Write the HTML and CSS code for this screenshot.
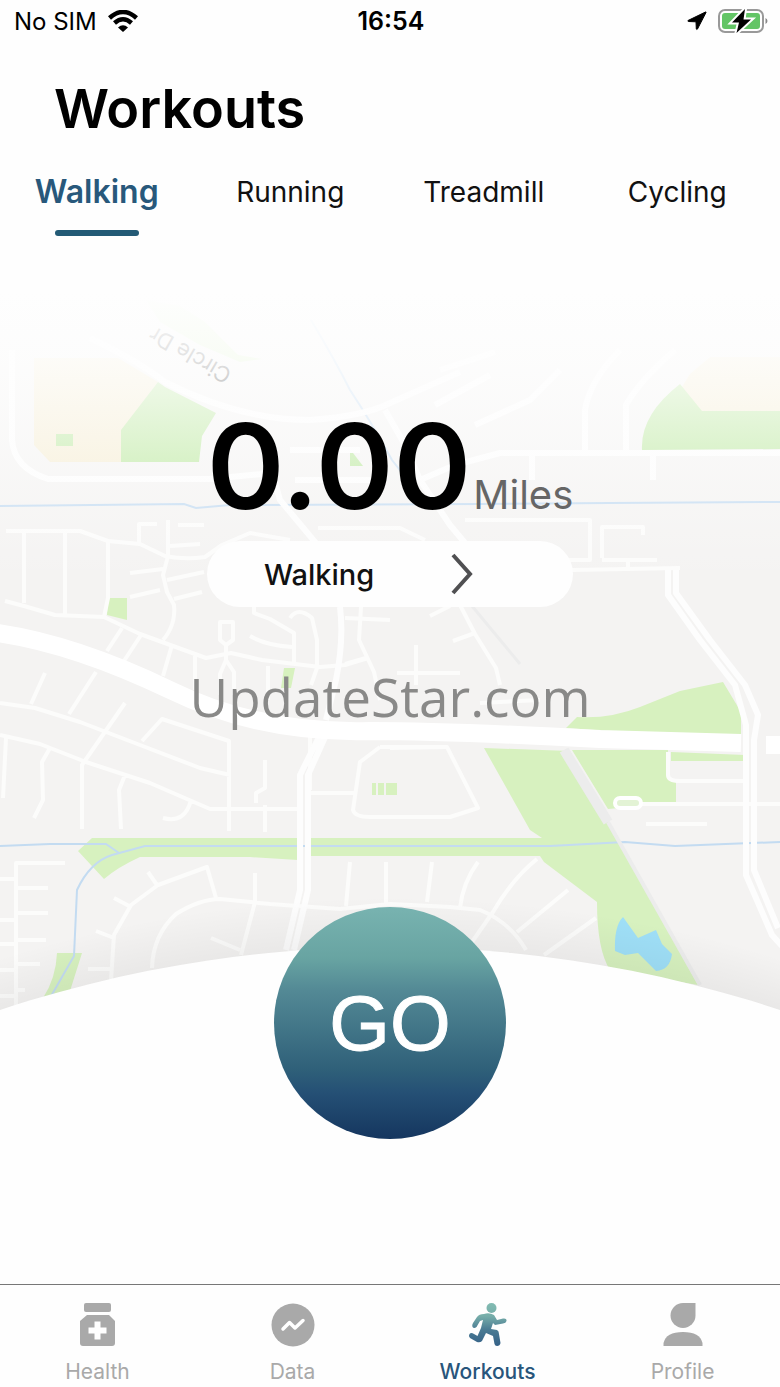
FILE: index.html
```html
<!DOCTYPE html>
<html lang="en">
<head>
    <meta charset="UTF-8">
    <meta name="viewport" content="width=device-width, initial-scale=1.0">

    <title>Workouts</title>

    <link rel="stylesheet" href="styles.css">
</head>
<body>

    <!-- Status bar -->
    <div class="status-bar">
        <div class="carrier">
            <span>No SIM</span>
            <svg class="wifi-icon" viewBox="0 0 30 22" aria-hidden="true">
                <path d="M1.500 8 Q15 -4 28.500 8" fill="none" stroke="#000" stroke-width="4.500"/>
                <path d="M6.500 13 Q15 5.500 23.500 13" fill="none" stroke="#000" stroke-width="4.500"/>
                <path d="M10 17.500 Q15 13 20 17.500 L15 22 Z"/>
            </svg>
        </div>
        <time class="clock">16:54</time>
        <div class="indicators">
            <svg class="location-icon" viewBox="0 0 20 20" aria-hidden="true">
                <path d="M18.500 1 L1 9.500 Q0.500 10.300 1.500 10.500 L9 10.800 L9.300 18 Q9.800 19 10.500 18 L19 1.500 Q19.200 0.600 18.500 1 Z" stroke="#000" stroke-width="1"/>
            </svg>
            <svg class="battery-icon" viewBox="0 0 50 26" aria-hidden="true">
                <rect x="1" y="2" width="44" height="22" rx="6" fill="none" stroke="#999" stroke-width="2"/>
                <rect x="4" y="5" width="38" height="16" rx="3" fill="#63c566"/>
                <path d="M47.500 10 Q49.500 11 49.500 13 Q49.500 15 47.500 16 Z" fill="#888"/>
                <path d="M27 1 L14 14.500 H21 L18.500 25 L33 11.500 H25.500 Z" fill="#000" stroke="#fff" stroke-width="4" paint-order="stroke"/>
            </svg>
        </div>
    </div>

    <h1 class="page-title">Workouts</h1>

    <!-- Workout type tabs -->
    <nav class="tabs">
        <a href="#walking" class="tab active">Walking</a>
        <a href="#running" class="tab">Running</a>
        <a href="#treadmill" class="tab">Treadmill</a>
        <a href="#cycling" class="tab">Cycling</a>
    </nav>

    <main class="stage">
        <svg class="map" viewBox="0 260 780 780" aria-hidden="true">
            <defs>
                <linearGradient id="fade" x1="0" y1="260" x2="0" y2="580" gradientUnits="userSpaceOnUse">
                    <stop offset="0" stop-color="#fefefe"/>
                    <stop offset="0.100" stop-color="#fefefe"/>
                    <stop offset="0.310" stop-color="#fefefe" stop-opacity="0.860"/>
                    <stop offset="0.560" stop-color="#fefefe" stop-opacity="0.550"/>
                    <stop offset="0.750" stop-color="#fefefe" stop-opacity="0.300"/>
                    <stop offset="1" stop-color="#fefefe" stop-opacity="0"/>
                </linearGradient>
                <radialGradient id="shade" cx="390" cy="2186" r="1289" gradientUnits="userSpaceOnUse">
                    <stop offset="0.961" stop-color="#000" stop-opacity="0.045"/>
                    <stop offset="1" stop-color="#000" stop-opacity="0"/>
                </radialGradient>
            </defs>

            <rect y="260" width="780" height="780" fill="#f4f3f2"/>

            <!-- fields and parks -->
            <path d="M34 358 H118 L158 382 L122 430 V462 H50 L34 445 Z" fill="#f5ecd0"/>
            <path d="M690 374 L710 357 H780 V412 H700 L680 390 Z" fill="#f5ecd0"/>
            <g fill="#d7f1bf">
                <path d="M158 382 L165 387 L216 413 L202 436 L199 462 H121 V430 Z" fill="#b8e79a"/>
                <path d="M56 434 H73 V446 H56 Z" fill="#b8e79a"/>
                <path d="M146 300 L180 306 L205 322 L238 355 L262 359 L240 362 L200 345 L160 322 Z"/>
                <path d="M350 449 L363 466 H350 Z" fill="#b8e79a"/>
                <path d="M642 450 Q640 415 680 384 L702 411 H780 V449 Z" fill="#b8e79a"/>
                <path d="M108 598 H127 V620 L107 615 Z"/>
                <path d="M284 668 H295 L291 688 H281 Z"/>
                <path d="M566 728 L577 717 Q610 719 640 707 L680 691 L723 682 L741 712 V740 Z"/>
                <path d="M671 752 L745 755 V761 H671 Z"/>
                <path d="M484 748 L570 751 L620 843 L698 985 L610 970 Q597 950 597 902 L544 862 L540 856 H310 V838 H542 L530 830 Z"/>
                <path d="M572 750 H668 V780 H676 V803 L608 809 Z"/>
                <path d="M92 838 H298 V860 L250 857 H140 Q118 867 104 879 L78 851 Z"/>
                <path d="M57 953 H82 L70 991 L43 998 Q56 978 57 953 Z"/>
                <path d="M372 783 H397 V795 H372 Z"/>
            </g>

            <!-- water -->
            <g fill="none" stroke="#c3dbf1" stroke-width="2">
                <path d="M0 506 L184 504 L196 508 L230 505 L480 504 L610 503 L780 502"/>
                <path d="M0 846 L50 844 H106 L119 853"/>
                <path d="M50 998 L74 956 L77 890 Q90 862 112 855 L145 846 H310 L550 846 L625 842 L675 846 L780 842"/>
                <path d="M311 320 Q335 360 350 390 Q370 420 392 460 L425 502"/>
            </g>
            <path d="M615 951 Q614 926 623 917 L638 938 L656 930 L662 944 L672 954 Q670 970 656 971 L638 953 L625 955 Z" fill="#9fdff7"/>

            <!-- pale paths -->
            <g fill="none" stroke="#ececec" stroke-width="10">
                <path d="M564 750 L608 822"/>
                <path d="M608 822 L700 985" stroke-width="4"/>
                <path d="M472 606 L520 664" stroke-width="3"/>
            </g>

            <!-- small streets -->
            <g class="streets">
                <path d="M6 531 H80 L108 541 L140 544 L165 556 Q185 560 205 557 L222 545 L250 533 L290 540 M24 532 V603 M65 532 V614 M108 542 V598 L104 617 M5 601 L24 606 L55 615 L104 617 L140 634 L206 658 L231 653 L262 660 L320 667 L345 665 L368 658"/>
                <path d="M139 544 V524 H157 M168 520 V556 L163 575 L167 592 L174 605 Q176 625 163 640 M178 525 H204 M170 546 L200 544 M130 573 L163 569 M167 580 L204 572 M130 597 L160 590 M174 599 L202 592"/>
                <path d="M122 628 L107 651 M141 635 L124 661 M172 645 L163 676 M195 656 V690 M250 636 Q265 645 292 647 M254 606 V613 L270 619 L294 633 V662 M290 618 Q298 606 312 618 L317 640 V668 L311 685 M268 666 V700 M361 607 L359 640 L374 672 L380 700 M345 664 L366 658"/>
                <path d="M220 622 V640 L226 645 L233 640 V622 Z M226 645 V660 L220 674 V695 M226 660 L234 672 V695"/>
                <path d="M0 703 L35 708 L80 722 L140 745 L200 768 L230 775 M45 673 L31 704 M96 672 L69 714 M125 703 L82 765 V829 M142 741 L162 719 L229 741 V831 M0 735 L40 744 L86 762 L150 783 L210 809 H303 M50 748 L42 762 L43 800 L34 818 M6 738 L3 798 M125 775 L119 790 L121 829 M191 800 Q185 824 163 818 M265 760 V788 L256 793 V803 M265 805 V832"/>
                <path d="M308 793 H355 M380 747 L360 762 L353 810 Q355 817 370 817 H450 L478 808 L447 747 L380 747 M310 724 V790"/>
                <path d="M65 863 H16 V1005 M0 879 H16 M16 888 H48 M0 920 H16 M16 913 H48 M0 944 H16 M16 940 H46 M16 964 H40 M0 970 H16 M16 990 H25 M0 996 H16"/>
                <path d="M111 980 L114 935 L131 905 L158 885 L207 867 L216 898 M148 872 L157 885 M114 898 L131 907 M96 931 L114 938 M88 969 H111"/>
                <path d="M152 968 Q153 935 176 914 Q200 899 220 899 L270 904 L340 909 L390 904 L450 907 L480 910 Q510 922 526 950 M255 873 V902 L241 955 M211 938 L240 950 M350 862 L346 906 M386 862 V904 M432 862 L427 902 M478 862 Q463 882 460 908 M537 859 Q513 878 493 912 L472 942 M568 890 L517 932 M596 918 L544 955"/>
                <path d="M318 528 H400 L425 540 M465 520 H590 V560 H560 M572 570 L680 568 M602 558 V527 H643 V535 M602 560 H657 M628 560 V568 M460 605 L475 634 L496 668 L500 685 M430 616 L450 606 M453 641 L475 633 M416 645 V685 M397 673 H460 M480 703 L540 700 M345 618 L390 620"/>
                <path d="M390 748 L447 747 M668 752 V775 Q668 781 680 781 H745 M640 804 H780 M646 824 H707"/>
            </g>
            <rect x="615" y="798" width="26" height="10" rx="5" fill="#e3f3d5" stroke="#fff" stroke-width="4"/>
            <path d="M377 783 V795 M385 783 V795" stroke="#f4f3f2" stroke-width="2"/>

            <!-- wider streets -->
            <g class="roads">
                <path d="M12 350 V440 Q14 468 48 479 H210 L262 474 L275 482 L280 500 L330 560"/>
                <path d="M90 338 Q140 362 165 382 Q240 420 310 420 Q365 416 390 403 L460 372"/>
                <path d="M385 410 L405 445 L420 480 L450 525 L475 555 M420 480 L455 465 L500 453 H780 M585 452 V410 Q590 380 620 350 M626 452 V405 Q640 380 675 350 M440 370 L495 352 M435 405 L490 375 M475 425 L530 400 L560 370"/>
                <path d="M290 450 H360 M295 480 H385 M653 455 V480 M532 455 V480"/>
                <path d="M340 607 Q344 640 336 680 L326 720 M320 735 L300 775 V890 L286 950 M326 735 L308 775 V890 L294 950"/>
                <path d="M668 570 V595 L700 640 L735 685 L746 725 V875 L772 935 L790 955 M676 570 V593 L710 640 L745 685 L758 715 L754 740 V870 L778 928"/>
            </g>

            <!-- highway -->
            <path d="M-10 632 Q70 642 170 690 Q260 734 370 731 Q450 731 600 739 L741 743 M766 745 H790" fill="none" stroke="#fff" stroke-width="18"/>

            <text class="street-name" transform="translate(233 371) rotate(210)">Circle Dr</text>

            <rect y="260" width="780" height="320" fill="url(#fade)"/>
            <rect y="880" width="780" height="160" fill="url(#shade)"/>
            <circle cx="390" cy="2186" r="1239" fill="#fefefe"/>
        </svg>

        <div class="distance">
            <span class="distance-value">0.00</span>
            <span class="distance-unit">Miles</span>
        </div>

        <button type="button" class="mode-btn">
            <span>Walking</span>
            <svg class="chevron" viewBox="0 0 22 44" aria-hidden="true">
                <path d="M2 3 L19 22 L2 41" fill="none" stroke="#505052" stroke-width="4"/>
            </svg>
        </button>

        <p class="watermark">UpdateStar.com</p>

        <button type="button" class="go-btn">GO</button>
    </main>

    <!-- Bottom navigation -->
    <nav class="bottom-nav">
        <a href="#health" class="nav-item">
            <svg class="nav-icon" viewBox="0 0 44 44" aria-hidden="true">
                <rect x="8" y="0" width="27" height="9" rx="2"/>
                <path d="M11 12 H33 L39 18 V40 Q39 43 36 43 H7 Q4 43 4 40 V18 Z"/>
                <path d="M21.500 18.500 V36.500 M12.500 27.500 H30.500" stroke="#fff" stroke-width="6"/>
            </svg>
            <span>Health</span>
        </a>
        <a href="#data" class="nav-item">
            <svg class="nav-icon" viewBox="0 0 44 44" aria-hidden="true">
                <circle cx="22" cy="22" r="21.500"/>
                <path d="M12 26 L18.500 19.500 L24 25 L32 17.500" fill="none" stroke="#fff" stroke-width="3.500" stroke-linecap="round" stroke-linejoin="round"/>
            </svg>
            <span>Data</span>
        </a>
        <a href="#workouts" class="nav-item active">
            <svg class="nav-icon" viewBox="0 0 44 44" aria-hidden="true">
                <defs>
                    <linearGradient id="runner" x1="0" y1="0" x2="0" y2="44" gradientUnits="userSpaceOnUse">
                        <stop offset="0" stop-color="#82bbb2"/>
                        <stop offset="0.300" stop-color="#76ada9"/>
                        <stop offset="0.600" stop-color="#4b7c94"/>
                        <stop offset="1" stop-color="#335f86"/>
                    </linearGradient>
                </defs>
                <circle cx="25.500" cy="5" r="5" fill="url(#runner)"/>
                <path d="M18 11 Q23 9 28 12 L31 17 L37 15.500 Q41 15 40.500 18 Q40 20 37 20.500 L29 22 L27 20 L25 26 L31 27 Q33 28 33 31 L34.500 40 Q34 43 31 43 Q29 43 28.500 41 L27 33 L20 30 L16 38 Q14 40 11 39 L4 35 Q2 33 3.500 31 Q5 29 8 31 L11.500 33 L15 25 L17 17 L14 18 L10.500 24 Q8 26 6.500 24 Q5.500 22.500 7 20 L11 14 Q13 11 18 11 Z" fill="url(#runner)"/>
            </svg>
            <span>Workouts</span>
        </a>
        <a href="#profile" class="nav-item">
            <svg class="nav-icon" viewBox="0 0 44 44" aria-hidden="true">
                <path d="M22 0 H34.500 V12.500 A12.500 12.500 0 1 1 22 0 Z"/>
                <path d="M2.500 43 V40 Q5 29 22 29 Q39 29 41.500 40 V43 Z"/>
            </svg>
            <span>Profile</span>
        </a>
    </nav>

</body>
</html>
```

FILE: styles.css
```css
* {
    box-sizing: border-box;
}
body {
    font-family: Inter, "Liberation Sans", sans-serif;
    background-color: #fefefe;
    color: #000;
    margin: 0;
    min-height: 100vh;
    display: flex;
    flex-direction: column;
}
a {
    color: inherit;
    text-decoration: none;
}
button {
    font-family: inherit;
    border: none;
    cursor: pointer;
}

/* Status bar */
.status-bar {
    display: grid;
    grid-template-columns: 1fr auto 1fr;
    align-items: center;
    height: 42px;
    padding: 0 12px 0 14px;
    font-size: 24px;
}
.carrier, .indicators {
    display: flex;
    align-items: center;
    gap: 11px;
}
.indicators {
    justify-content: flex-end;
}
.clock {
    font-size: 25px;
    font-weight: 600;
}
.wifi-icon {
    width: 30px;
    height: 22px;
}
.location-icon {
    width: 20px;
    height: 20px;
}
.battery-icon {
    width: 50px;
    height: 26px;
}

.page-title {
    font-size: 54px;
    line-height: 68px;
    font-weight: 600;
    margin: 33px 54px 0;
}

/* Tabs */
.tabs {
    display: grid;
    grid-template-columns: repeat(4, 1fr);
    padding: 28px 6px 0 0;
    height: 117px;
}
.tab {
    display: flex;
    flex-direction: column;
    align-items: center;
    gap: 17px;
    font-size: 28px;
    line-height: 42px;
    color: #111;
}
.tab.active {
    color: #28587b;
    font-size: 32px;
    font-weight: 600;
}
.tab.active::after {
    content: "";
    width: 84px;
    height: 6px;
    border-radius: 3px;
    background: #235a75;
}

/* Map area */
.stage {
    position: relative;
    flex: 1;
    display: flex;
    flex-direction: column;
    align-items: center;
    padding: 146px 0 60px;
}
.map {
    position: absolute;
    top: 0;
    left: 0;
    width: 100%;
    z-index: -1;
}
.streets {
    fill: none;
    stroke: #fcfcfb;
    stroke-width: 4;
    stroke-linejoin: round;
}
.roads {
    fill: none;
    stroke: #fdfdfd;
    stroke-width: 6;
    stroke-linejoin: round;
}
.street-name {
    font-size: 22px;
    fill: #333;
}
.distance {
    display: flex;
    align-items: baseline;
    gap: 2px;
}
.distance-value {
    font-size: 118px;
    line-height: 120px;
    font-weight: 600;
}
.distance-unit {
    font-size: 40px;
    line-height: 48px;
    color: #666;
}
.mode-btn {
    display: flex;
    align-items: center;
    justify-content: space-between;
    width: 366px;
    height: 66px;
    margin-top: 15px;
    padding: 0 100px 0 57px;
    border-radius: 33px;
    background: #fefefe;
    color: #111;
    font-size: 29px;
    font-weight: 500;
}
.chevron {
    width: 22px;
    height: 44px;
}
.watermark {
    margin: 53px 0 0;
    font-family: "Open Sans", "Noto Sans", sans-serif;
    font-size: 53px;
    line-height: 74px;
    color: #898988;
}
.go-btn {
    width: 232px;
    height: 232px;
    margin-top: 173px;
    border-radius: 50%;
    background: linear-gradient(#78b3b0, #68a4a2 22%, #538995 36%, #2f6079 70%, #255075 80%, #15365f);
    color: #fff;
    font-family: "Liberation Sans", Arial, sans-serif;
    font-size: 78px;
    -webkit-text-stroke: 1px #fff;
}

/* Bottom navigation */
.bottom-nav {
    display: grid;
    grid-template-columns: repeat(4, 1fr);
    height: 103px;
    border-top: 1px solid #777;
    padding-top: 18px;
}
.nav-item {
    display: flex;
    flex-direction: column;
    align-items: center;
    gap: 12px;
    color: #a9a9a9;
    font-size: 21px;
    line-height: 26px;
}
.nav-item.active {
    color: #28557b;
    font-weight: 500;
}
.nav-icon {
    width: 44px;
    height: 44px;
    fill: #a9a9a9;
}
```
